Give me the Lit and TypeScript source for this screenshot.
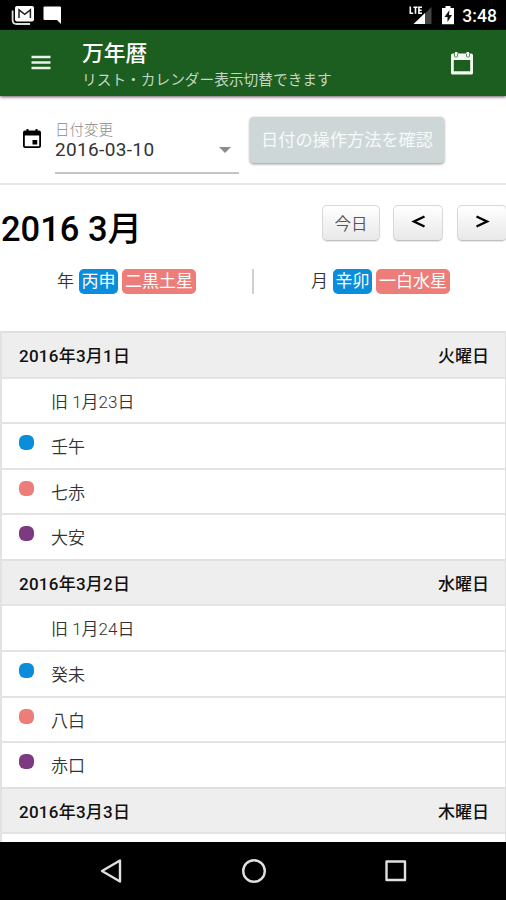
import { LitElement, html, css, svg, nothing } from "lit";
import { customElement, property } from "lit/decorators.js";

interface Day {
  date: string;
  weekday: string;
  lunar?: string;
  entries: { tone: string; label: string }[];
}

const days: Day[] = [
  {
    date: "2016年3月1日",
    weekday: "火曜日",
    lunar: "旧 1月23日",
    entries: [
      { tone: "blue", label: "壬午" },
      { tone: "coral", label: "七赤" },
      { tone: "purple", label: "大安" },
    ],
  },
  {
    date: "2016年3月2日",
    weekday: "水曜日",
    lunar: "旧 1月24日",
    entries: [
      { tone: "blue", label: "癸未" },
      { tone: "coral", label: "八白" },
      { tone: "purple", label: "赤口" },
    ],
  },
  { date: "2016年3月3日", weekday: "木曜日", entries: [] },
];

@customElement("status-bar")
export class StatusBar extends LitElement {
  static styles = css`
    :host { display: flex; align-items: center; height: 30px; flex: none; background: #000; color: #fff; padding: 0 9px 0 11px; box-sizing: border-box; }
    .mail { width: 24px; height: 20px; margin-right: 7px; }
    .chat { width: 20px; height: 20px; }
    .grow { flex: 1; }
    .signal { width: 24px; height: 20px; margin-right: 8px; }
    .battery { width: 14px; height: 20px; margin-right: 7px; }
    .clock { font: 500 17.5px/30px Roboto, sans-serif; padding-top: 2px; letter-spacing: 0.1px; }
  `;
  render() {
    return html`
      <svg class="mail" viewBox="0 0 24 20">
        <path d="M1.6 5.500v9.500q0 4 4 4h13.500" fill="none" stroke="#ddd" stroke-width="1.8" />
        <rect x="4" y="1" width="19" height="15.500" rx="2" fill="#fff" />
        <path d="M8 13V4.800l5.700 4.500 5.700-4.500V13" fill="none" stroke="#222" stroke-width="1.500" />
      </svg>
      <svg class="chat" viewBox="0 0 20 20"><path d="M2.500 1.500h15.500q1 0 1 1V19l-4-4H2.500q-1 0-1-1V2.500q0-1 1-1z" fill="#fff" /></svg>
      <div class="grow"></div>
      <svg class="signal" viewBox="0 0 24 20">
        <path d="M15 9.500L22.500 2V19H15z" fill="#444" />
        <path d="M4.500 19L16 8V19z" fill="#fff" />
        <path d="M1.300 1.500v6.800h2.900M4.400 2.200h4.200M6.500 2.200v6.600M13 2.200H9.900v6.100H13M10 5.200h2.600" fill="none" stroke="#fff" stroke-width="1.600" />
      </svg>
      <svg class="battery" viewBox="0 0 14 20">
        <path d="M4.500 1h5v2h3.500v16.200H1V3h3.500z" fill="#fff" />
        <path d="M8.500 5L3.500 12h3v5l4.500-7H8z" fill="#111" />
      </svg>
      <span class="clock">3:48</span>
    `;
  }
}

@customElement("app-header")
export class AppHeader extends LitElement {
  static styles = css`
    :host { display: flex; height: 66px; flex: none; background: #1b5e1f; color: #fff; box-shadow: 0 1px 3px rgba(50, 30, 50, 0.75); position: relative; box-sizing: border-box; padding: 0 30px; align-items: center; }
    .menu { width: 20px; height: 16px; margin: -2px 31px 0 1px; }
    .titles { flex: 1; font-family: Roboto, "Noto Sans CJK JP", sans-serif; }
    .title { font-size: 21.8px; line-height: 28px; font-weight: 500; margin-top: 3px; }
    .sub { font-size: 14.7px; line-height: 20px; color: #c3d6c4; margin-top: 2px; white-space: nowrap; }
    .cal { width: 24px; height: 24px; margin-right: 2px; }
  `;
  render() {
    return html`
      <svg class="menu" viewBox="0 0 20 16"><path d="M.5 3h19M.5 8.500h19M.5 14h19" stroke="#e8f2e8" stroke-width="2.500" /></svg>
      <div class="titles">
        <div class="title">万年暦</div>
        <div class="sub">リスト・カレンダー表示切替できます</div>
      </div>
      <svg class="cal" viewBox="0 0 24 24">
        <path fill-rule="evenodd" d="M3 2.500h2V1h2.500v1.500h9V1H19v1.500h2q2 0 2 1.500v18q0 1.500-1.500 1.500h-19Q1 23.500 1 22V4q0-1.500 2-1.500zM3.800 9v11.200h16.400V9z" fill="#f2faf2" />
        <path d="M4.500 3v2.500q1.500 1.500 3 0V3M16.500 3v2.500q1.500 1.500 3 0V3" stroke="#4a7f4d" stroke-width=".9" fill="none" />
      </svg>
    `;
  }
}

@customElement("date-toolbar")
export class DateToolbar extends LitElement {
  static styles = css`
    :host { display: flex; height: 89px; flex: none; box-sizing: border-box; border-bottom: 2px solid #e8e8e8; padding-left: 22px; font-family: Roboto, "Noto Sans CJK JP", sans-serif; }
    .icon { width: 20px; height: 22px; margin: 32px 13px 0 0; }
    .field { width: 184px; height: 78px; box-sizing: border-box; border-bottom: 2px solid #c4c4c4; padding-top: 26px; }
    .label { font-size: 14.500px; line-height: 17px; font-weight: 300; color: #8a8a8a; }
    .value { display: flex; justify-content: space-between; align-items: center; font-size: 19px; line-height: 22px; letter-spacing: 0.35px; color: #333; }
    .arrow { width: 12px; height: 6px; margin-right: 8px; }
    .help { width: 194px; height: 46px; margin: 21px 0 0 11px; border: 0; padding: 0; border-radius: 4px; background: #ced7d8; color: #f6fafa; font: 400 17.200px/46px Roboto, "Noto Sans CJK JP", sans-serif; box-shadow: 0 1px 3px rgba(0, 0, 0, 0.45); white-space: nowrap; }
  `;
  render() {
    return html`
      <svg class="icon" viewBox="0 0 20 22">
        <path fill-rule="evenodd" d="M3 2.500h1.500V1h2v1.500h7V1h2v1.500H17q2 0 2 2v13.500q0 2-2 2H3q-2 0-2-2V4.500q0-2 2-2zM2.800 7.500v10.700h14.400V7.500z" />
        <path d="M10.500 12h4.700v4.500h-4.700z" />
      </svg>
      <div class="field">
        <div class="label">日付変更</div>
        <div class="value">
          <span>2016-03-10</span>
          <svg class="arrow" viewBox="0 0 12 6"><path d="M0 0h12L6 6z" fill="#8c8c8c" /></svg>
        </div>
      </div>
      <button class="help">日付の操作方法を確認</button>
    `;
  }
}

@customElement("month-header")
export class MonthHeader extends LitElement {
  static styles = css`
    :host { display: block; height: 146px; flex: none; font-family: Roboto, "Noto Sans CJK JP", sans-serif; }
    .top { display: flex; align-items: flex-start; padding-top: 20px; height: 62px; box-sizing: content-box; }
    .month { flex: 1; margin: 2px 0 0; font-size: 34.500px; line-height: 44px; font-weight: 500; padding-left: 1px; color: #000; white-space: nowrap; }
    .btn { flex: none; height: 36px; box-sizing: border-box; border: 1px solid #d8d8d8; border-bottom-color: #c0c0c0; border-radius: 5px; background: linear-gradient(#fff, #e8e8e8); box-shadow: 0 1px 1px rgba(0, 0, 0, 0.1); padding: 0; display: flex; align-items: center; justify-content: center; font: 400 16.500px/34px Roboto, "Noto Sans CJK JP", sans-serif; color: #555; }
    .today { width: 58px; margin-right: 13px; padding-top: 3px; font-weight: 350; }
    .prev { width: 50px; margin-right: 14px; }
    .next { width: 50px; margin-right: -1px; }
    .chev { width: 15px; height: 13px; margin-top: -3px; }
    .pillars { display: grid; grid-template-columns: 252px 2px 252px; align-items: center; height: 26px; margin-top: 1px; }
    .pillar { display: flex; align-items: center; gap: 4px; padding-left: 57px; font-size: 17px; line-height: 25px; color: #333; }
    .tag { height: 25px; border-radius: 5px; color: #fff; font-weight: 400; box-sizing: border-box; white-space: nowrap; }
    .name { width: 17px; margin-right: 1px; font-weight: 350; }
    .stem { background: #0a8ddb; width: 39px; padding: 0 2.500px; }
    .star { background: #ec7d79; width: 74px; padding: 0 3px; }
    .rule { height: 25px; background: #d0d0d0; }
  `;
  private pillar(name: string, stem: string, star: string) {
    return html`<div class="pillar"><span class="name">${name}</span><span class="tag stem">${stem}</span><span class="tag star">${star}</span></div>`;
  }
  render() {
    return html`
      <div class="top">
        <h2 class="month">2016 3月</h2>
        <button class="btn today">今日</button>
        <button class="btn prev"><svg class="chev" viewBox="0 0 15 13"><path d="M13.500 1.500L3 6.500l10.500 5" fill="none" stroke="#000" stroke-width="2.400" /></svg></button>
        <button class="btn next"><svg class="chev" viewBox="0 0 15 13"><path d="M1.500 1.500L12 6.500l-10.500 5" fill="none" stroke="#000" stroke-width="2.400" /></svg></button>
      </div>
      <div class="pillars">
        ${this.pillar("年", "丙申", "二黒土星")}
        <div class="rule"></div>
        ${this.pillar("月", "辛卯", "一白水星")}
      </div>
    `;
  }
}

@customElement("day-list")
export class DayList extends LitElement {
  @property({ attribute: false }) days: Day[] = [];
  static styles = css`
    :host { display: block; flex: 1; min-height: 0; overflow: hidden; box-sizing: border-box; border-left: 2px solid #e2e2e2; border-right: 1px solid #e2e2e2; font-family: Roboto, "Noto Sans CJK JP", sans-serif; font-size: 17px; }
    .row { display: flex; height: 45.570px; box-sizing: border-box; border-top: 2px solid #e4e4e4; padding: 0 16px 0 17px; line-height: 47px; color: #333; }
    .head { background: #eee; justify-content: space-between; color: #111; font-weight: 500; border-top-color: #e0e0e0; }
    .date { letter-spacing: 0.25px; }
    .mark { width: 15px; height: 15px; border-radius: 6px; margin: 11px 17px 0 0; flex: none; }
    .text { font-weight: 350; }
    .blue { background: #0a8ddb; }
    .coral { background: #ec7d79; }
    .purple { background: #7e3a80; }
  `;
  render() {
    return this.days.map(
      (d) => html`
        <div class="row head"><span class="date">${d.date}</span><span>${d.weekday}</span></div>
        <div class="row"><span class="mark"></span>${d.lunar ? html`<span class="text">${d.lunar}</span>` : nothing}</div>
        ${d.entries.map((e) => html`<div class="row"><span class="mark ${e.tone}"></span><span class="text">${e.label}</span></div>`)}
      `,
    );
  }
}

@customElement("nav-bar")
export class NavBar extends LitElement {
  static styles = css`
    :host { display: flex; justify-content: space-between; align-items: center; height: 58px; flex: none; box-sizing: border-box; background: #000; padding: 0 97px 0 98px; }
    .key { width: 26px; height: 26px; }
  `;
  private key(shape: unknown) {
    return html`<svg class="key" viewBox="0 0 26 26" fill="none" stroke="#e0e0e0" stroke-width="2.400" stroke-linejoin="round">${shape}</svg>`;
  }
  render() {
    return html`
      ${this.key(svg`<path d="M22 2.500v21L4 13z" />`)}
      ${this.key(svg`<circle cx="13" cy="13" r="10.800" />`)}
      ${this.key(svg`<rect x="3.500" y="3.500" width="18.500" height="18.500" />`)}
    `;
  }
}

@customElement("app-root")
export class AppRoot extends LitElement {
  static styles = css`
    :host { display: flex; flex-direction: column; width: 506px; height: 900px; overflow: hidden; background: #fff; }
  `;
  render() {
    return html`
      <status-bar></status-bar>
      <app-header></app-header>
      <date-toolbar></date-toolbar>
      <month-header></month-header>
      <day-list .days=${days}></day-list>
      <nav-bar></nav-bar>
    `;
  }
}
